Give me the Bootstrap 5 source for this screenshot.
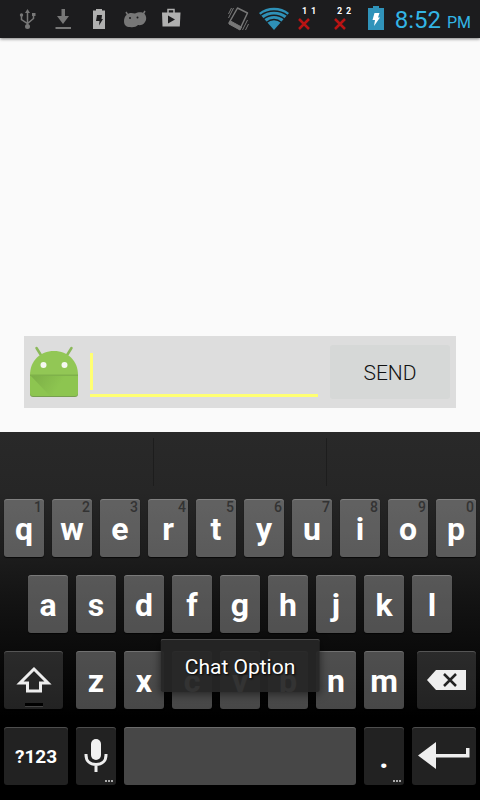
<!DOCTYPE html>
<html lang="en">
<head>
<meta charset="utf-8">
<meta name="viewport" content="width=device-width, initial-scale=1">
<title>Chat</title>
<link href="https://cdn.jsdelivr.net/npm/bootstrap@5.3.0/dist/css/bootstrap.min.css" rel="stylesheet">
<style>
body { font-family: Roboto, "Liberation Sans", sans-serif; background: #fafafa; }
.status-bar { height: 38px; padding: 0 9px; background: #1c1c1e; box-shadow: 0 1px 3px rgba(0,0,0,.5); }
.status-bar svg { width: 36px; height: 38px; flex: none; }
.status-bar .battery { width: 24px; }
.clock { color: #33b5e5; font-size: 24px; line-height: 34px; padding: 4px 0 0 7px; }
.clock span { font-size: 16px; padding-left: 6px; }
.chat-bar { margin: 24px; height: 72px; padding: 0 6px 0 5px; background: #ddd; }
.message { height: 44px; border: 0; border-bottom: 3px solid #ffff72; background: transparent; outline: 0; font-size: 22px; min-width: 0; padding: 0 0 0 8px; }
.message-wrap { margin: 6px 12px 0 10px; }
.caret { left: 0; top: 0; width: 3px; height: 37px; background: #ffff72; }
.send { flex: 0 0 120px; height: 54px; border-radius: 3px; border: 0; background: #d6d8d7; color: #111; font-size: 21px; font-weight: 300; line-height: 54px; padding: 1px 0 0; }
.send:hover { background: #cfd1d0; color: #111; }
.keyboard { background: linear-gradient(#292929 0, #262626 60px, #1c1c1c 125px, #131313 170px, #000 285px); padding: 0 4px 15px; }
.suggestions { height: 67px; padding: 6px 0 13px; }
.suggestions div { flex: 148 1 0; }
.suggestions .middle { flex-grow: 172; }
.suggestions div + div { border-left: 1px solid #1d1d1d; }
.key-rows { gap: 18px; }
.key-row { gap: 8px; }
.key-row.inset { padding: 0 24px; }
.key { flex: 40 1 0; min-width: 0; height: 58px; border: 0; border-radius: 3px; padding: 2px 0 0; color: #fff; background: rgba(255,255,255,.28); box-shadow: inset 0 1px rgba(255,255,255,.2), 0 1px 1px rgba(0,0,0,.7); font-size: 32px; line-height: 38px; font-weight: 700; }
.key.dark { background: rgba(255,255,255,.135); }
.key-edge { flex-grow: 59; }
.key-shift { margin-right: 5px; }
.key-delete { margin-left: 5px; }
.key-wide { flex-grow: 64; font-size: 19px; }
.key-space { flex-grow: 232; }
.hint { right: 2px; top: 0; font-size: 14px; line-height: 16px; font-weight: 500; color: #333; }
.more { right: 3px; bottom: 3px; width: 8px; height: 2px; background: repeating-linear-gradient(90deg, #aaa 0 2px, transparent 2px 3px); }
.lock-light { left: 50%; bottom: 2px; width: 18px; height: 4px; margin-left: -9px; background: #000; border-bottom: 1px solid #444; }
.notice { left: 50%; bottom: 108px; transform: translateX(-50%); height: 53px; padding: 0 24px; border-radius: 2px; background: rgba(38,38,38,.94); color: #fff; font-size: 21px; line-height: 56px; text-shadow: 1px 1px 2px #000; box-shadow: inset 0 1px #484848, 0 2px 8px rgba(0,0,0,.5); white-space: nowrap; }
</style>
<script src="https://cdn.jsdelivr.net/npm/bootstrap@5.3.0/dist/js/bootstrap.bundle.min.js" defer></script>
</head>
<body class="d-flex flex-column min-vh-100">
<header class="status-bar d-flex align-items-center">
  <svg viewBox="0 0 36 38" fill="none" stroke="#777" stroke-width="1.5" aria-hidden="true"><path d="M18.500 12v14M12.500 16v3.500l6 4 6-5V15"/><path d="M18.500 9l2.500 4h-5z" fill="#777" stroke="none"/><circle cx="18.500" cy="26.500" r="2.500" fill="#777" stroke="none"/><circle cx="12.500" cy="15" r="1.700" fill="#777" stroke="none"/><path d="M23 13h3.500v3H23z" fill="#777" stroke="none"/></svg>
  <svg viewBox="0 0 36 38" fill="#777" aria-hidden="true"><path d="M16.500 9h3.500v7h4l-6 8-6-8h4.500zM10.500 27h15.500v2H10.500z"/></svg>
  <svg viewBox="0 0 36 38" aria-hidden="true"><path d="M15 9h6v1.500h3V29H12V10.500h3z" fill="#b0b0b0"/><path d="M16 15h5l-.5 4h1.500l-4 6.500.500-4.500H15z" fill="#1c1c1e"/></svg>
  <svg viewBox="0 0 36 38" aria-hidden="true"><path d="M9 12l3 5M28 11l-3 5" stroke="#777" stroke-width="1.500"/><path d="M9.500 15C12 12.500 15 13 18 13.500c3-1.500 7-2 9 0 2.500 2 3 6 1 8.500-1.500 3-5 3.500-7 3-2 2-5 2.500-8 2-4 0-6-2-6-6 0-2.500 1-5 2.500-6z" fill="#777"/><circle cx="13" cy="18" r="1" fill="#1c1c1e"/><circle cx="20.500" cy="17.500" r="1" fill="#1c1c1e"/></svg>
  <svg viewBox="0 0 36 38" aria-hidden="true"><path d="M15 13V9.500h6V13" fill="none" stroke="#b0b0b0" stroke-width="1.500"/><path d="M9 12.500h18.500l-.7 14H9.500z" fill="#b0b0b0"/><path d="M15 15.500l7 4-7 4z" fill="#1c1c1e"/></svg>
  <svg class="ms-auto" viewBox="0 0 36 38" fill="none" stroke="#777" aria-hidden="true"><path d="M17.500 8l10 5-7.500 16-11-6z" stroke-width="1.500" stroke-linejoin="round"/><path d="M9 24l11 6 1.500-3-11-6z" fill="#777"/><path d="M8.500 14l3-6M8.500 18l5-10M22.500 30l5-10M25.500 30l3-6" stroke-width="1"/></svg>
  <svg viewBox="0 0 36 38" aria-hidden="true"><path d="M3 13C11 6 25 6 33 13L18 30z" fill="#2e91b8"/><path d="M4.500 15.500c8-6 19-6 27 0M7.500 19c6-5 15-5 21 0M10.500 22.500c4.500-4 10.500-4 15 0" stroke="#1c1c1e" stroke-width="1.300" fill="none"/></svg>
  <svg viewBox="0 0 36 38" role="img" aria-label="SIM 1 no signal"><path d="M7 19l10 10M17 19L7 29" stroke="#b91414" stroke-width="2.500"/><text x="10" y="14" font-size="9" font-weight="700" fill="#fff">1</text><text x="19" y="14" font-size="9" font-weight="700" fill="#fff">1</text></svg>
  <svg viewBox="0 0 36 38" role="img" aria-label="SIM 2 no signal"><path d="M7 19l10 10M17 19L7 29" stroke="#b91414" stroke-width="2.500"/><text x="9" y="14" font-size="9" font-weight="700" fill="#fff">2</text><text x="18" y="14" font-size="9" font-weight="700" fill="#fff">2</text></svg>
  <svg class="battery" viewBox="0 0 24 38" aria-hidden="true"><path d="M9 6h6v2h5v22H4V8h5z" fill="#3093ba"/><path d="M10.500 13h5l-1.500 4.500h2L10 26l1-6H8.500z" fill="#fff"/></svg>
  <div class="clock text-nowrap">8:52<span>PM</span></div>
</header>

<main class="flex-grow-1 d-flex flex-column justify-content-end">
  <form class="chat-bar d-flex align-items-center">
    <svg width="51" height="56" viewBox="0 0 51 56" class="flex-shrink-0" role="img" aria-label="Android">
      <path d="M7.500 4l5 8M42.500 4l-5 8" stroke="#8bb95a" stroke-width="2.500" stroke-linecap="round"/>
      <path d="M1 32h48v18q0 3-3 3H4q-3 0-3-3z" fill="#779f50"/>
      <path d="M1 31h48v18q0 3-3 3H4q-3 0-3-3z" fill="#8dc550"/>
      <defs><linearGradient id="fold" gradientUnits="userSpaceOnUse" x1="1" y1="31" x2="26" y2="48"><stop offset="0" stop-color="#7bad46"/><stop offset="1" stop-color="#8dc550"/></linearGradient></defs>
      <path d="M1 31h40v21H21z" fill="url(#fold)"/>
      <path d="M1 31C1 17 11 7 25 7s24 10 24 24z" fill="#92c755"/>
      <path d="M1 30.500h48v1.500H1z" fill="#7fb14a"/>
      <circle cx="14.500" cy="21" r="3" fill="#f5f8f0"/><circle cx="35.500" cy="21" r="3" fill="#f5f8f0"/>
    </svg>
    <div class="message-wrap position-relative flex-grow-1 d-flex">
      <input type="text" class="message w-100" aria-label="Message">
      <span class="caret position-absolute"></span>
    </div>
    <button type="button" class="send btn">SEND</button>
  </form>
</main>

<section class="keyboard position-relative" aria-label="Keyboard">
  <div class="suggestions d-flex"><div></div><div class="middle"></div><div></div></div>
  <div class="key-rows d-flex flex-column">
    <div class="key-row d-flex">
      <button type="button" class="key position-relative">q<span class="hint position-absolute">1</span></button>
      <button type="button" class="key position-relative">w<span class="hint position-absolute">2</span></button>
      <button type="button" class="key position-relative">e<span class="hint position-absolute">3</span></button>
      <button type="button" class="key position-relative">r<span class="hint position-absolute">4</span></button>
      <button type="button" class="key position-relative">t<span class="hint position-absolute">5</span></button>
      <button type="button" class="key position-relative">y<span class="hint position-absolute">6</span></button>
      <button type="button" class="key position-relative">u<span class="hint position-absolute">7</span></button>
      <button type="button" class="key position-relative">i<span class="hint position-absolute">8</span></button>
      <button type="button" class="key position-relative">o<span class="hint position-absolute">9</span></button>
      <button type="button" class="key position-relative">p<span class="hint position-absolute">0</span></button>
    </div>
    <div class="key-row inset d-flex">
      <button type="button" class="key">a</button>
      <button type="button" class="key">s</button>
      <button type="button" class="key">d</button>
      <button type="button" class="key">f</button>
      <button type="button" class="key">g</button>
      <button type="button" class="key">h</button>
      <button type="button" class="key">j</button>
      <button type="button" class="key">k</button>
      <button type="button" class="key">l</button>
    </div>
    <div class="key-row d-flex">
      <button type="button" class="key dark key-edge key-shift position-relative d-flex justify-content-center align-items-center" aria-label="Shift">
        <svg width="36" height="30" viewBox="0 0 36 30" fill="none" stroke="#eee" stroke-width="3"><path d="M18 3L4 17H11.500v8h13v-8h7.500z"/></svg>
        <span class="lock-light position-absolute"></span>
      </button>
      <button type="button" class="key">z</button>
      <button type="button" class="key">x</button>
      <button type="button" class="key">c</button>
      <button type="button" class="key">v</button>
      <button type="button" class="key">b</button>
      <button type="button" class="key">n</button>
      <button type="button" class="key">m</button>
      <button type="button" class="key dark key-edge key-delete d-flex justify-content-center align-items-center" aria-label="Delete">
        <svg width="40" height="22" viewBox="0 0 40 22"><path d="M0 10L9 0h30v20H9z" fill="#eee"/><path d="M17 4l12 12M29 4L17 16" stroke="#222" stroke-width="2.500"/></svg>
      </button>
    </div>
    <div class="key-row d-flex">
      <button type="button" class="key dark key-wide">?123</button>
      <button type="button" class="key dark position-relative d-flex justify-content-center align-items-center" aria-label="Voice input">
        <svg width="24" height="36" viewBox="0 0 24 36"><rect x="7" y="0" width="10" height="21" rx="5" fill="#f2f2f2"/><path d="M2 15v1c0 6 4 9.500 10 9.500S22 22 22 16v-1M12 26v7" fill="none" stroke="#eee" stroke-width="3"/></svg>
        <span class="more position-absolute"></span>
      </button>
      <button type="button" class="key key-space" aria-label="Space"></button>
      <button type="button" class="key dark position-relative">.<span class="more position-absolute"></span></button>
      <button type="button" class="key dark key-wide d-flex justify-content-center align-items-center" aria-label="Enter">
        <svg width="52" height="30" viewBox="0 0 52 30" fill="#eee"><path d="M0 13.500L18 0v12h30V6h3.500v9.500H18V27z"/></svg>
      </button>
    </div>
  </div>
  <div class="notice position-absolute" role="status">Chat Option</div>
</section>
</body>
</html>
